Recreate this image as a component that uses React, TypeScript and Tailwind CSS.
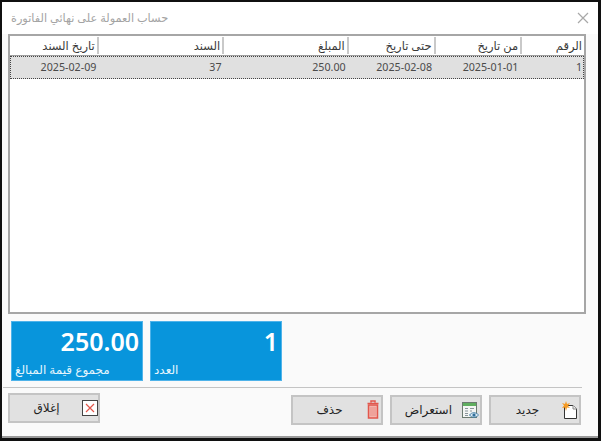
import React from "react";

const font = { fontFamily: '"Noto Sans", "DejaVu Sans", sans-serif' };

const columns = [
  { label: "الرقم", width: "w-[64px]", value: "1" },
  { label: "من تاريخ", width: "w-[87px]", value: "2025-01-01" },
  { label: "حتى تاريخ", width: "w-[87px]", value: "2025-02-08" },
  { label: "المبلغ", width: "w-[125px]", value: "250.00" },
  { label: "السند", width: "w-[126px]", value: "37" },
  { label: "تاريخ السند", width: "w-[87px]", value: "2025-02-09" },
];

function NewIcon() {
  return (
    <svg width="20" height="20" viewBox="0 0 20 20">
      <path d="M5.5 5.5H14l3.500 3.500v9.500h-12z" fill="#fff" stroke="#333" />
      <path d="M14 5.500V9h3.500" fill="#eee" stroke="#888" />
      <path d="M7 1l1 3 3-1-2 3 2 2-3-.5L7 11 6 7.500 3 8l2-2.500L3 3l3 1z" fill="#f59a23" />
    </svg>
  );
}

function ViewIcon() {
  return (
    <svg width="20" height="20" viewBox="0 0 20 20">
      <rect x="2.500" y="2.500" width="14" height="15" fill="#f4f6f4" stroke="#6b7a70" />
      <rect x="3" y="3" width="13" height="3" fill="#5fae5f" />
      <path d="M5 8.500h3M10 8.500h4M5 11h3M10 11h2M5 13.500h3M5 15.500h3" stroke="#8a949a" />
      <path d="M9.500 15c2.200-3 6.500-3 9 0-2.500 3-6.800 3-9 0z" fill="#dce9f3" stroke="#3f7fa8" />
      <circle cx="14" cy="15" r="1.600" fill="#2f6f9a" />
    </svg>
  );
}

function TrashIcon() {
  return (
    <svg width="16" height="20" viewBox="0 0 16 20">
      <path d="M6 2.500v-1.500h4v1.500M2.500 3.500h11" fill="none" stroke="#e2574c" strokeWidth="1.500" />
      <rect x="3.500" y="5" width="9" height="13" fill="#f3b5ae" stroke="#e2574c" strokeWidth="1.500" />
      <path d="M6 7v9M8 7v9M10 7v9" stroke="#eb8f86" />
    </svg>
  );
}

function CloseIcon() {
  return (
    <svg width="16" height="16" viewBox="0 0 16 16">
      <rect x="0.500" y="0.500" width="15" height="15" fill="#fff" stroke="#444" />
      <path d="M4 4l8 8M12 4l-8 8" stroke="#e2574c" strokeWidth="1.200" />
    </svg>
  );
}

function ActionButton(props: { label: string; icon: React.ReactNode; className?: string }) {
  return (
    <button
      type="button"
      className={`flex h-[30px] w-[92px] items-center border-2 border-[#c4c4c4] bg-[#e1e1e1] text-[12px] text-[#1f1f1f] ${props.className ?? ""}`}
    >
      <span className="flex w-[28px] shrink-0 justify-start">{props.icon}</span>
      <span className="flex-1 pl-[13px] text-center">{props.label}</span>
    </button>
  );
}

function Tile(props: { value: string; label: string }) {
  return (
    <div className="flex h-[60px] w-[132px] flex-col border border-[#4fb3ea] bg-[#0895dc] px-[3px] text-white">
      <div className="h-[38px] text-right text-[25px] leading-[39px] font-semibold">{props.value}</div>
      <div className="text-left text-[12px] leading-[20px] text-[#e6f5fd]">{props.label}</div>
    </div>
  );
}

export default function App() {
  return (
    <div className="h-[441px] w-[601px] bg-[#101010] p-[2px]" style={font}>
      <div className="flex h-[436px] w-[596px] flex-col border-b-2 border-[#9a9a9a] bg-[#fafafa]" dir="rtl">
        <div className="flex h-[32px] shrink-0 items-center justify-between bg-white px-[9px]" dir="ltr">
          <span className="text-[11.300px] text-[#a3a3a3]" dir="rtl">
            حساب العمولة على نهائي الفاتورة
          </span>
          <svg width="12" height="12" viewBox="0 0 12 12">
            <path d="M1 1l10 10M11 1L1 11" stroke="#a8a8a8" strokeWidth="1.200" />
          </svg>
        </div>

        <div className="mr-[12px] ml-[6px] h-[280px] shrink-0 border-2 border-[#a6a6a6] bg-white">
          <div className="flex h-[20px] items-center border-b border-[#9e9e9e]">
            {columns.map((c) => (
              <div
                key={c.label}
                className={`flex h-[17px] items-center border-l-2 border-[#c9c9c9] pr-[2px] text-[11.500px] text-[#3a3a3a] last:border-l-0 ${c.width}`}
              >
                {c.label}
              </div>
            ))}
          </div>
          <div className="flex h-[23px] items-center border border-dotted border-[#444] bg-[#e0e0e0]">
            {columns.map((c) => (
              <div
                key={c.label}
                className={`pr-[1px] text-[10.700px] text-[#4a4a4a] ${c.width}`}
                dir="ltr"
                style={{ textAlign: "right" }}
              >
                {c.value}
              </div>
            ))}
          </div>
        </div>

        <div className="mt-[7px] ml-[9px] flex gap-[7px]" dir="ltr">
          <Tile value="250.00" label="مجموع قيمة المبالغ" />
          <Tile value="1" label="العدد" />
        </div>

        <div className="mt-[6px] mr-[16px] ml-[1px] h-[1px] shrink-0 bg-[#c4c4c4]" />

        <div className="mt-[5px] mr-[17px] ml-[6px] flex items-start justify-between">
          <div className="mt-[2px] flex gap-[7px]">
            <ActionButton label="جديد" icon={<NewIcon />} />
            <ActionButton label="استعراض" icon={<ViewIcon />} />
            <ActionButton label="حذف" icon={<TrashIcon />} />
          </div>
          <ActionButton label="إغلاق" icon={<CloseIcon />} />
        </div>
      </div>
    </div>
  );
}
